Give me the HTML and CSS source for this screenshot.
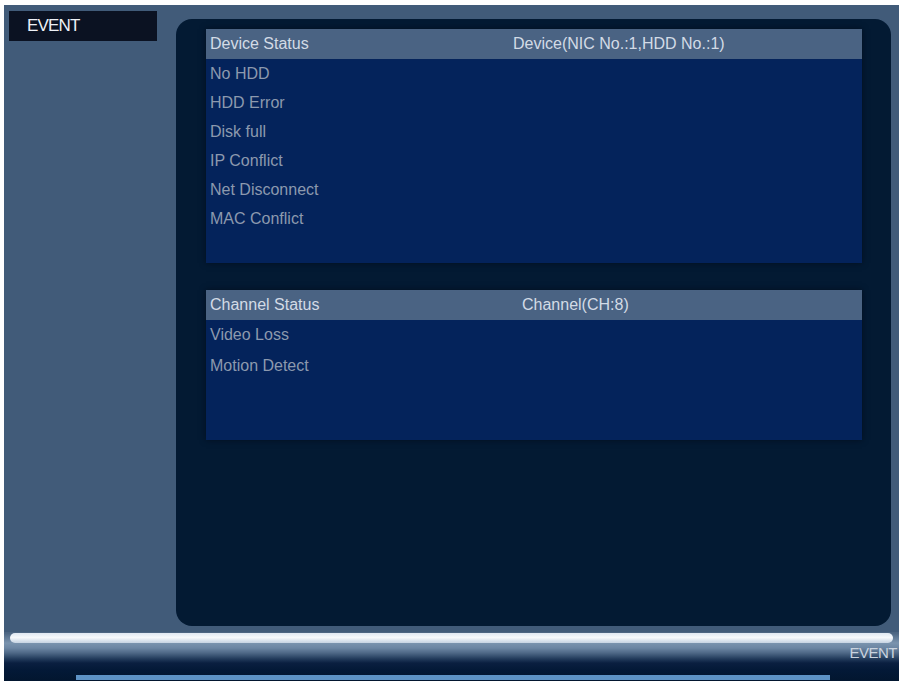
FILE: index.html
```html
<!DOCTYPE html>
<html lang="en">
<head>
<meta charset="utf-8">
<title>EVENT</title>
<link rel="stylesheet" href="styles.css">
</head>
<body>
<div class="screen">
  <div class="content">
    <aside class="side">
      <div class="tab">EVENT</div>
    </aside>
    <main class="panel">
      <section class="group group-device">
        <div class="group-head">
          <span class="col-a">Device Status</span>
          <span class="col-b">Device(NIC No.:1,HDD No.:1)</span>
        </div>
        <ul class="group-list">
          <li>No HDD</li>
          <li>HDD Error</li>
          <li>Disk full</li>
          <li>IP Conflict</li>
          <li>Net Disconnect</li>
          <li>MAC Conflict</li>
        </ul>
      </section>
      <section class="group group-channel">
        <div class="group-head">
          <span class="col-a">Channel Status</span>
          <span class="col-b">Channel(CH:8)</span>
        </div>
        <ul class="group-list">
          <li>Video Loss</li>
          <li>Motion Detect</li>
        </ul>
      </section>
    </main>
  </div>
  <footer class="bar">
    <div class="bar-gloss"></div>
    <div class="bar-label">EVENT</div>
    <div class="bar-strip"></div>
  </footer>
</div>
</body>
</html>
```

FILE: styles.css
```css
html, body {
  margin: 0;
  padding: 0;
  background: #ffffff;
}

body {
  width: 904px;
  height: 682px;
  overflow: hidden;
  font-family: "Liberation Sans", Arial, sans-serif;
}

.screen {
  margin: 5px 5px 0 4px;
  width: 895px;
  height: 676px;
  display: flex;
  flex-direction: column;
  background: #415b79;
}

.content {
  display: flex;
  height: 627px;
}

/* left menu column */
.side {
  width: 172px;
  flex: none;
  padding: 6px 0 0 5px;
  box-sizing: border-box;
}

.tab {
  width: 148px;
  height: 30px;
  box-sizing: border-box;
  padding: 4px 0 0 18px;
  background: #0b1222;
  color: #eef1f6;
  font-size: 17px;
  letter-spacing: -0.8px;
  line-height: 22px;
}

/* dark rounded main panel */
.panel {
  width: 715px;
  margin: 14px 0 6px 0;
  box-sizing: border-box;
  padding: 10px 29px 0 30px;
  background: #031a33;
  border-radius: 16px;
  display: flex;
  flex-direction: column;
  gap: 27px;
}

.group {
  box-shadow: 0 0 6px rgba(0, 6, 18, 0.6);
}

.group-head {
  display: flex;
  height: 30px;
  align-items: center;
  padding-left: 4px;
  background: #4a6383;
  color: #d3dbe6;
  font-size: 16px;
}

.group-device .col-a { width: 303px; }
.group-channel .col-a { width: 312px; }

.group-list {
  list-style: none;
  margin: 0;
  padding: 0 0 0 4px;
  background: #04235b;
  color: #8c99ae;
  font-size: 16px;
}

.group-device .group-list {
  height: 204px;
}

.group-device .group-list li {
  height: 29px;
  line-height: 29px;
}

.group-channel .group-list {
  height: 120px;
}

.group-channel .group-list li {
  height: 31px;
  line-height: 29px;
}

/* glossy status bar along the bottom */
.bar {
  height: 49px;
  display: flex;
  flex-direction: column;
  background: linear-gradient(to bottom,
    #4c6582 0px,
    #4c6582 1px,
    #7a93ae 11px,
    #6c86a3 16px,
    #4e6886 21px,
    #213a5a 27px,
    #0a1f40 31px,
    #031937 38px,
    #02162f 49px);
}

.bar-gloss {
  height: 10px;
  margin: 1px 6px 0 6px;
  border-radius: 5px;
  background: linear-gradient(to bottom, #dfe8f2 0%, #f6f9fc 45%, #c6d3e2 100%);
}

.bar-label {
  align-self: flex-end;
  margin: 1px 2px 0 0;
  color: #c9d3df;
  font-size: 15px;
  line-height: 17px;
  letter-spacing: -0.5px;
}

.bar-strip {
  margin: auto 69px 1px 72px;
  height: 5px;
  background: #5d93c6;
}
```
